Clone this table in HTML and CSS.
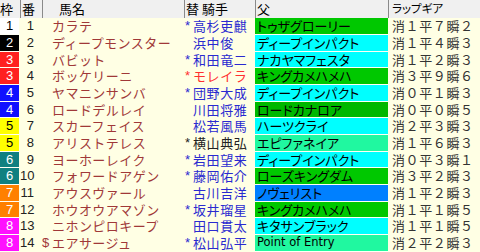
FILE: index.html
```html
<!DOCTYPE html>
<html lang="ja">
<head>
<meta charset="utf-8">
<link rel="stylesheet" href="styles.css">
</head>
<body>
<div class="table">
  <div class="row head">
    <div class="h">枠</div>
    <div class="h">番</div>
    <div class="h hname">馬名</div>
    <div class="h">替&nbsp;騎手</div>
    <div class="h">父</div>
    <div class="h hlap">ラップギア</div>
  </div>

  <div class="row"><div class="waku w1">1</div><div class="num">1</div><div class="name"><span class="mk"></span>カラテ</div><div class="jockey"><span class="ast">*</span>高杉吏麒</div><div class="sire g">トゥザグローリー</div><div class="lap">消１平７瞬２</div></div>
  <div class="row"><div class="waku w2">2</div><div class="num">2</div><div class="name"><span class="mk"></span>ディープモンスター</div><div class="jockey"><span class="ast"></span>浜中俊</div><div class="sire c">ディープインパクト</div><div class="lap">消１平４瞬３</div></div>
  <div class="row"><div class="waku w3">3</div><div class="num">3</div><div class="name"><span class="mk"></span>バビット</div><div class="jockey"><span class="ast">*</span>和田竜二</div><div class="sire c">ナカヤマフェスタ</div><div class="lap">消１平２瞬３</div></div>
  <div class="row"><div class="waku w3">3</div><div class="num">4</div><div class="name"><span class="mk"></span>ボッケリーニ</div><div class="jockey red"><span class="ast">*</span>モレイラ</div><div class="sire g">キングカメハメハ</div><div class="lap">消３平９瞬６</div></div>
  <div class="row"><div class="waku w4">4</div><div class="num">5</div><div class="name"><span class="mk"></span>ヤマニンサンバ</div><div class="jockey"><span class="ast">*</span>団野大成</div><div class="sire c">ディープインパクト</div><div class="lap">消０平１瞬３</div></div>
  <div class="row"><div class="waku w4">4</div><div class="num">6</div><div class="name"><span class="mk"></span>ロードデルレイ</div><div class="jockey"><span class="ast"></span>川田将雅</div><div class="sire g2">ロードカナロア</div><div class="lap">消０平０瞬５</div></div>
  <div class="row"><div class="waku w5">5</div><div class="num">7</div><div class="name"><span class="mk"></span>スカーフェイス</div><div class="jockey"><span class="ast"></span>松若風馬</div><div class="sire c">ハーツクライ</div><div class="lap">消２平３瞬３</div></div>
  <div class="row"><div class="waku w5">5</div><div class="num">8</div><div class="name"><span class="mk"></span>アリストテレス</div><div class="jockey dark"><span class="ast">*</span>横山典弘</div><div class="sire s">エピファネイア</div><div class="lap">消１平６瞬３</div></div>
  <div class="row"><div class="waku w6">6</div><div class="num">9</div><div class="name"><span class="mk"></span>ヨーホーレイク</div><div class="jockey"><span class="ast">*</span>岩田望来</div><div class="sire c">ディープインパクト</div><div class="lap">消０平３瞬１</div></div>
  <div class="row"><div class="waku w6">6</div><div class="num">10</div><div class="name"><span class="mk"></span>フォワードアゲン</div><div class="jockey"><span class="ast">*</span>藤岡佑介</div><div class="sire g">ローズキングダム</div><div class="lap">消３平２瞬３</div></div>
  <div class="row"><div class="waku w7">7</div><div class="num">11</div><div class="name"><span class="mk"></span>アウスヴァール</div><div class="jockey"><span class="ast"></span>古川吉洋</div><div class="sire b">ノヴェリスト</div><div class="lap">消１平２瞬３</div></div>
  <div class="row"><div class="waku w7">7</div><div class="num">12</div><div class="name"><span class="mk"></span>ホウオウアマゾン</div><div class="jockey"><span class="ast">*</span>坂井瑠星</div><div class="sire g">キングカメハメハ</div><div class="lap">消１平１瞬５</div></div>
  <div class="row"><div class="waku w8">8</div><div class="num">13</div><div class="name"><span class="mk"></span>ニホンピロキープ</div><div class="jockey"><span class="ast"></span>田口貫太</div><div class="sire c">キタサンブラック</div><div class="lap">消１平１瞬５</div></div>
  <div class="row"><div class="waku w8">8</div><div class="num">14</div><div class="name"><span class="mk">$</span>エアサージュ</div><div class="jockey"><span class="ast">*</span>松山弘平</div><div class="sire s latin">Point of Entry</div><div class="lap">消２平２瞬３</div></div>
</div>
</body>
</html>
```

FILE: styles.css
```css
html, body {
  margin: 0;
  padding: 0;
  background: #ffffe4;
}
body {
  width: 480px;
  height: 252px;
  overflow: hidden;
  font-family: "Noto Sans CJK JP", "Liberation Sans", sans-serif;
  font-size: 13px;
}
.table {
  display: flex;
  flex-direction: column;
}
.row {
  display: grid;
  grid-template-columns: 20px 22px 142px 71px 133px 92px;
  height: 16.67px;
  line-height: 15.67px;
  white-space: nowrap;
}
.row.head {
  height: 18.3px;
  line-height: 17px;
  background: #f0f0f0;
}
.h {
  color: #000;
  font-size: 13px;
  padding-left: 1px;
  border-left: 1px solid #8a8a8a;
}
.h:first-child {
  border-left: none;
  padding-left: 0;
}
.hname {
  padding-left: 16px;
}
.hlap {
  font-size: 11.5px;
  font-feature-settings: "palt";
  padding-left: 3px;
}
.waku {
  font-family: "Liberation Sans", sans-serif;
  text-align: center;
  border-bottom: 1px solid #fffff4;
  width: 19px;
  box-sizing: border-box;
  height: 100%;
}
.w1 { background: #ffffff; color: #000; }
.w2 { background: #000000; color: #fff; }
.w3 { background: #ff2020; color: #fff; }
.w4 { background: #1010ff; color: #fff; }
.w5 { background: #ffff00; color: #000; }
.w6 { background: #108080; color: #fff; }
.w7 { background: #ff8000; color: #fff; }
.w8 { background: #ff10ff; color: #fff; }
.num {
  font-family: "Liberation Sans", sans-serif;
  color: #222;
  text-align: right;
  padding-right: 8px;
}
.name {
  color: #a03838;
  letter-spacing: 0.45px;
  display: flex;
}
.mk {
  display: inline-block;
  width: 10px;
  color: #a03838;
  font-family: "Liberation Sans", sans-serif;
}
.jockey {
  color: #2a2ad0;
  letter-spacing: 0.6px;
  display: flex;
}
.jockey.red { color: #ff3030; }
.jockey.dark { color: #222; }
.ast {
  display: inline-block;
  width: 8px;
  padding-left: 1px;
  font-family: "Liberation Sans", sans-serif;
  letter-spacing: 0;
}
.sire {
  color: #000;
  font-size: 13px;
  padding-left: 2px;
  font-feature-settings: "palt";
  border-bottom: 1px solid #fffff4;
  box-sizing: border-box;
  height: 100%;
}
.sire.latin {
  font-family: "DejaVu Sans", sans-serif;
  font-size: 11.5px;
}
.g { background: #00c800; }
.g2 { background: #00b800; }
.c { background: #00ffff; }
.s { background: #20f8a0; }
.b { background: #0080ff; }
.lap {
  color: #333;
  padding-left: 4px;
  letter-spacing: 0.6px;
}
```
